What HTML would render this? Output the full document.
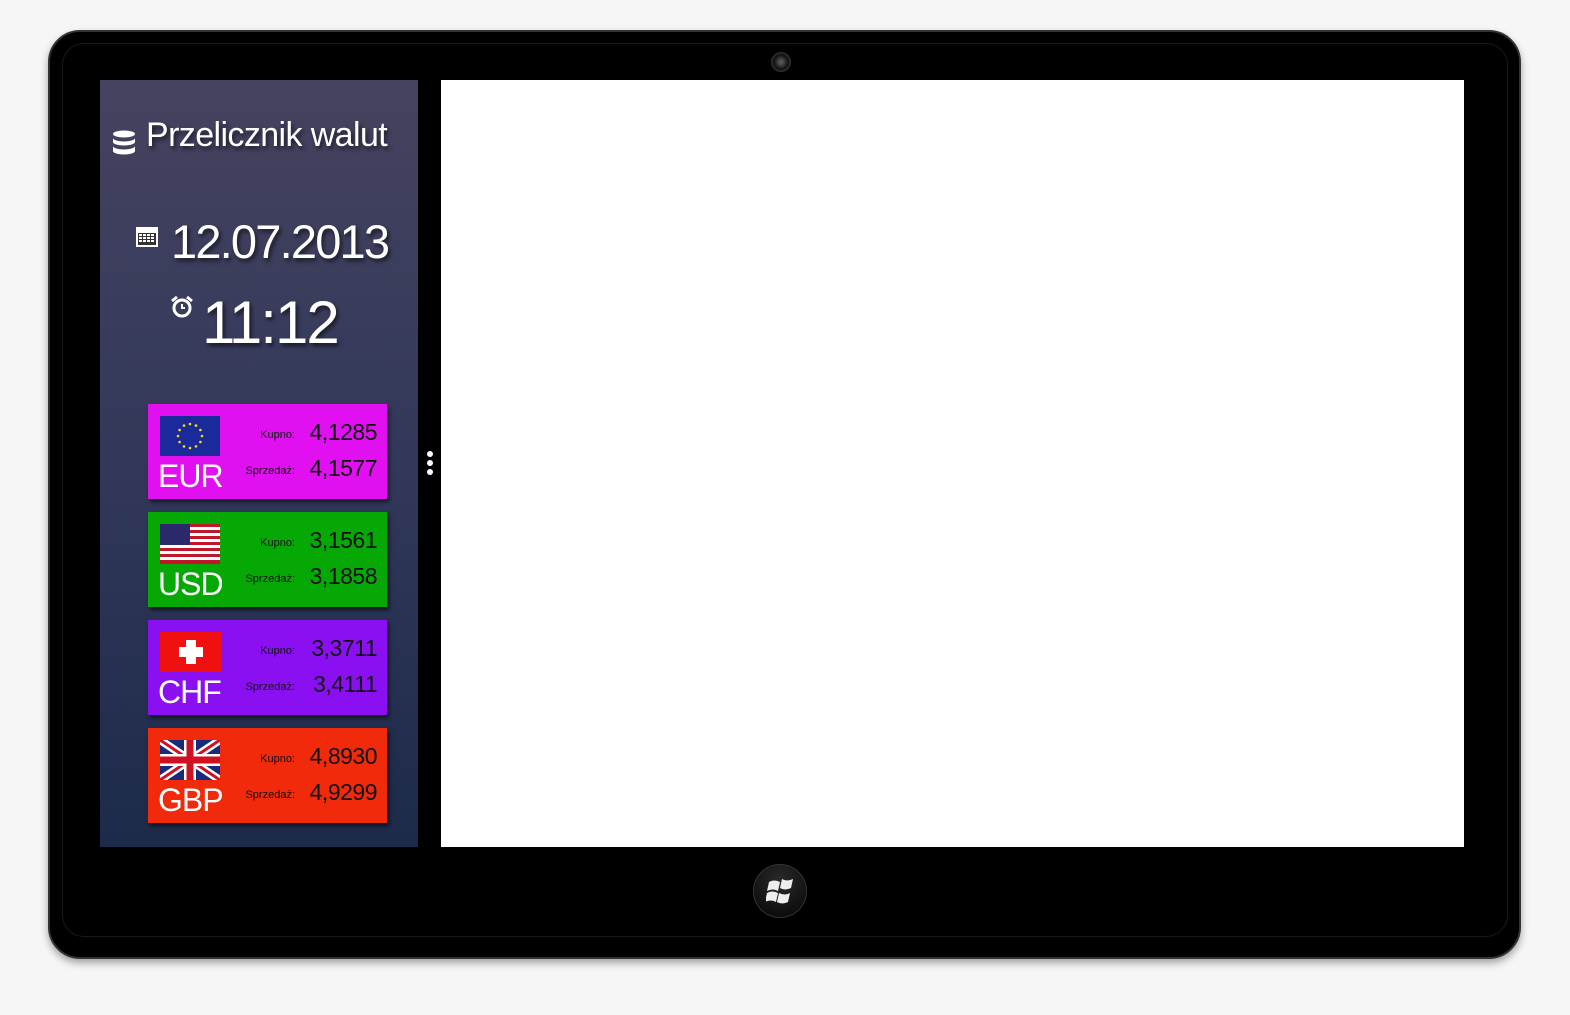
<!DOCTYPE html>
<html><head><meta charset="utf-8"><style>
*{margin:0;padding:0;box-sizing:border-box}
body{width:1570px;height:1015px;background:#f6f6f6;position:relative;overflow:hidden;font-family:"Liberation Sans",sans-serif}
.outer{position:absolute;left:48px;top:30px;width:1473px;height:929px;border-radius:32px;background:#000;border:2px solid #333;box-shadow:0 4px 8px rgba(0,0,0,.35)}
.inner{position:absolute;left:62px;top:43px;width:1446px;height:894px;border-radius:22px;background:#000;border:1px solid #1a1a1a}
.cam{position:absolute;left:771px;top:52px;width:20px;height:20px;border-radius:50%;background:radial-gradient(#555 10%,#111 50%,#333 70%,#000)}
.side{position:absolute;left:100px;top:80px;width:318px;height:767px;background:linear-gradient(#45435f,#32385a 50%,#1d2a4a)}
.bar{position:absolute;left:418px;top:80px;width:23px;height:767px;background:#000}
.dot{position:absolute;left:427px;width:6px;height:6px;border-radius:50%;background:#fff}
.white{position:absolute;left:441px;top:80px;width:1023px;height:767px;background:#fff}
.t{position:absolute;color:#fff;text-shadow:2px 3px 4px rgba(0,0,0,.6);white-space:nowrap}
.card{position:absolute;left:148px;width:239px;height:95px;box-shadow:2px 3px 4px rgba(0,0,0,.6)}
.code{position:absolute;left:10px;top:54px;font-size:32px;color:#fff;letter-spacing:-1px}
.lbl{position:absolute;font-size:11px;color:#111;right:92px}
.val{position:absolute;font-size:23px;color:#111;right:10px;letter-spacing:-.5px}
.flag{position:absolute;left:12px;top:12px;width:60px;height:40px}
.win{position:absolute;left:753px;top:864px;width:54px;height:54px;border-radius:50%;background:radial-gradient(circle at 50% 30%,#2a2a2a,#050505);border:1px solid #333}
</style></head><body>
<div class="outer"></div><div class="inner"></div><div class="cam"></div>
<div class="side"></div><div class="bar"></div>
<div class="dot" style="top:451px"></div><div class="dot" style="top:460px"></div><div class="dot" style="top:469px"></div>
<div class="white"></div>
<svg style="position:absolute;left:112px;top:130px" width="24" height="26" viewBox="0 0 24 26"><g fill="#fff"><ellipse cx="12" cy="4" rx="11" ry="3.5"/><path d="M1 8c0 2 5 3.5 11 3.5S23 10 23 8v4c0 2-5 3.5-11 3.5S1 14 1 12z"/><path d="M1 16c0 2 5 3.5 11 3.5S23 18 23 16v5c0 2-5 3.5-11 3.5S1 23 1 21z"/></g></svg>
<div class="t" style="left:146px;top:116px;font-size:34px;letter-spacing:-.6px">Przelicznik walut</div>
<svg style="position:absolute;left:135px;top:224px" width="24" height="24" viewBox="0 0 24 24"><rect x="1" y="3" width="22" height="20" fill="#fff"/><rect x="3" y="9" width="18" height="12" fill="#333"/><g fill="#fff"><rect x="4" y="10" width="3" height="2"/><rect x="8" y="10" width="3" height="2"/><rect x="12" y="10" width="3" height="2"/><rect x="16" y="10" width="3" height="2"/><rect x="4" y="13" width="3" height="2"/><rect x="8" y="13" width="3" height="2"/><rect x="12" y="13" width="3" height="2"/><rect x="16" y="13" width="3" height="2"/><rect x="4" y="16" width="3" height="2"/><rect x="8" y="16" width="3" height="2"/><rect x="12" y="16" width="3" height="2"/><rect x="16" y="16" width="3" height="2"/></g></svg>
<div class="t" style="left:171px;top:214px;font-size:47px;letter-spacing:-1.8px">12.07.2013</div>
<svg style="position:absolute;left:170px;top:295px" width="24" height="24" viewBox="0 0 24 24"><circle cx="12" cy="13" r="8" fill="none" stroke="#fff" stroke-width="3"/><path d="M12 9v4h3" stroke="#fff" stroke-width="2" fill="none"/><path d="M2 6l5-4M22 6l-5-4" stroke="#fff" stroke-width="3"/></svg>
<div class="t" style="left:202px;top:288px;font-size:60px;letter-spacing:-2px">11:12</div>

<div class="card" style="top:404px;background:#e010f0">
<svg class="flag" viewBox="0 0 60 40"><rect width="60" height="40" fill="#1a2a9a"/><g fill="#ffdd00"><circle cx="30" cy="8" r="1.3"/><circle cx="36" cy="9.6" r="1.3"/><circle cx="40.4" cy="14" r="1.3"/><circle cx="42" cy="20" r="1.3"/><circle cx="40.4" cy="26" r="1.3"/><circle cx="36" cy="30.4" r="1.3"/><circle cx="30" cy="32" r="1.3"/><circle cx="24" cy="30.4" r="1.3"/><circle cx="19.6" cy="26" r="1.3"/><circle cx="18" cy="20" r="1.3"/><circle cx="19.6" cy="14" r="1.3"/><circle cx="24" cy="9.6" r="1.3"/></g></svg>
<div class="code">EUR</div><div class="lbl" style="top:25px">Kupno:</div><div class="val" style="top:15px">4,1285</div><div class="lbl" style="top:61px">Sprzedaż:</div><div class="val" style="top:51px">4,1577</div></div>

<div class="card" style="top:512px;background:#06a806">
<svg class="flag" viewBox="0 0 60 40"><rect width="60" height="40" fill="#fff"/><g fill="#c0182a"><rect y="0" width="60" height="3"/><rect y="6" width="60" height="3"/><rect y="12" width="60" height="3"/><rect y="18" width="60" height="3"/><rect y="24" width="60" height="3"/><rect y="30" width="60" height="3"/><rect y="36" width="60" height="4"/></g><rect width="30" height="21" fill="#2a2a6a"/></svg>
<div class="code">USD</div><div class="lbl" style="top:25px">Kupno:</div><div class="val" style="top:15px">3,1561</div><div class="lbl" style="top:61px">Sprzedaż:</div><div class="val" style="top:51px">3,1858</div></div>

<div class="card" style="top:620px;background:#8a10f2">
<svg class="flag" viewBox="0 0 60 40" style="left:10px;width:64px"><rect width="64" height="40" fill="#f01010"/><rect x="26" y="8" width="10" height="24" fill="#fff"/><rect x="19" y="15" width="24" height="10" fill="#fff"/></svg>
<div class="code">CHF</div><div class="lbl" style="top:25px">Kupno:</div><div class="val" style="top:15px">3,3711</div><div class="lbl" style="top:61px">Sprzedaż:</div><div class="val" style="top:51px">3,4111</div></div>

<div class="card" style="top:728px;background:#f02a0a">
<svg class="flag" viewBox="0 0 60 40"><rect width="60" height="40" fill="#1a2a7a"/><path d="M0 0L60 40M60 0L0 40" stroke="#fff" stroke-width="8"/><path d="M0 0L60 40M60 0L0 40" stroke="#d01020" stroke-width="3"/><path d="M30 0v40M0 20h60" stroke="#fff" stroke-width="12"/><path d="M30 0v40M0 20h60" stroke="#d01020" stroke-width="7"/></svg>
<div class="code">GBP</div><div class="lbl" style="top:25px">Kupno:</div><div class="val" style="top:15px">4,8930</div><div class="lbl" style="top:61px">Sprzedaż:</div><div class="val" style="top:51px">4,9299</div></div>

<div class="win"></div>
<svg style="position:absolute;left:766px;top:878px" width="30" height="28" viewBox="0 0 30 28"><g fill="#eee"><path d="M3 4q5-3 11 0l-2 9q-5-3-11 0z"/><path d="M16 1q5 3 11 0l-2 9q-6 3-11 0z"/><path d="M1 15q5-3 11 0l-2 9q-5-3-11 0z"/><path d="M13 15q6 3 11 0l-2 9q-6 3-11 0z"/></g></svg>
</body></html>
